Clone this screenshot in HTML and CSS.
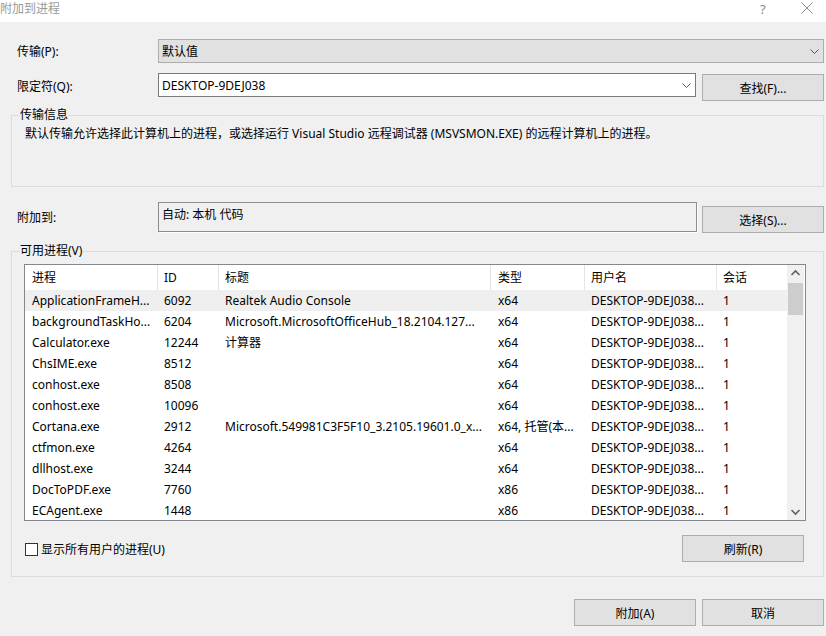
FILE: index.html
```html
<!DOCTYPE html>
<html lang="zh-CN">
<head>
<meta charset="utf-8">
<title>附加到进程</title>
<link rel="stylesheet" href="styles.css">
</head>
<body>
<div class="dialog">
  <div class="titlebar">
    <span class="title">附加到进程</span>
    <span class="help">?</span>
    <svg class="close" width="12" height="12" viewBox="0 0 12 12"><path d="M0.5 0.5L11.5 11.5M11.5 0.5L0.5 11.5" stroke="#8a8a8a" stroke-width="1" fill="none"/></svg>
  </div>
  <div class="body">
    <div class="row row-transport">
      <label class="lbl">传输(P):</label>
      <div class="select">
        <span>默认值</span>
        <svg class="chev" width="9" height="5" viewBox="0 0 9 5"><path d="M0.5 0.5L4.5 4.5L8.5 0.5" stroke="#555" fill="none"/></svg>
      </div>
    </div>
    <div class="row row-qual">
      <label class="lbl">限定符(Q):</label>
      <div class="combo">
        <span>DESKTOP-9DEJ038</span>
        <svg class="chev" width="9" height="5" viewBox="0 0 9 5"><path d="M0.5 0.5L4.5 4.5L8.5 0.5" stroke="#555" fill="none"/></svg>
      </div>
      <button class="btn btn-find">查找(F)...</button>
    </div>
    <fieldset class="group group-info">
      <legend>传输信息</legend>
      <p class="info">默认传输允许选择此计算机上的进程，或选择运行 Visual Studio 远程调试器 (MSVSMON.EXE) 的远程计算机上的进程。</p>
    </fieldset>
    <div class="row row-attach">
      <label class="lbl">附加到:</label>
      <div class="attachbox">自动: 本机 代码</div>
      <button class="btn btn-select">选择(S)...</button>
    </div>
    <fieldset class="group group-proc">
      <legend>可用进程(V)</legend>
      <div class="list">
        <div class="table">
          <div class="thead">
            <div class="c c1">进程</div><div class="c c2">ID</div><div class="c c3">标题</div><div class="c c4">类型</div><div class="c c5">用户名</div><div class="c c6">会话</div>
          </div>
          <div class="tr hl"><div class="c c1">ApplicationFrameH...</div><div class="c c2">6092</div><div class="c c3">Realtek Audio Console</div><div class="c c4">x64</div><div class="c c5">DESKTOP-9DEJ038...</div><div class="c c6">1</div></div>
          <div class="tr"><div class="c c1">backgroundTaskHo...</div><div class="c c2">6204</div><div class="c c3">Microsoft.MicrosoftOfficeHub_18.2104.127...</div><div class="c c4">x64</div><div class="c c5">DESKTOP-9DEJ038...</div><div class="c c6">1</div></div>
          <div class="tr"><div class="c c1">Calculator.exe</div><div class="c c2">12244</div><div class="c c3">计算器</div><div class="c c4">x64</div><div class="c c5">DESKTOP-9DEJ038...</div><div class="c c6">1</div></div>
          <div class="tr"><div class="c c1">ChsIME.exe</div><div class="c c2">8512</div><div class="c c3"></div><div class="c c4">x64</div><div class="c c5">DESKTOP-9DEJ038...</div><div class="c c6">1</div></div>
          <div class="tr"><div class="c c1">conhost.exe</div><div class="c c2">8508</div><div class="c c3"></div><div class="c c4">x64</div><div class="c c5">DESKTOP-9DEJ038...</div><div class="c c6">1</div></div>
          <div class="tr"><div class="c c1">conhost.exe</div><div class="c c2">10096</div><div class="c c3"></div><div class="c c4">x64</div><div class="c c5">DESKTOP-9DEJ038...</div><div class="c c6">1</div></div>
          <div class="tr"><div class="c c1">Cortana.exe</div><div class="c c2">2912</div><div class="c c3">Microsoft.549981C3F5F10_3.2105.19601.0_x...</div><div class="c c4">x64, 托管(本...</div><div class="c c5">DESKTOP-9DEJ038...</div><div class="c c6">1</div></div>
          <div class="tr"><div class="c c1">ctfmon.exe</div><div class="c c2">4264</div><div class="c c3"></div><div class="c c4">x64</div><div class="c c5">DESKTOP-9DEJ038...</div><div class="c c6">1</div></div>
          <div class="tr"><div class="c c1">dllhost.exe</div><div class="c c2">3244</div><div class="c c3"></div><div class="c c4">x64</div><div class="c c5">DESKTOP-9DEJ038...</div><div class="c c6">1</div></div>
          <div class="tr"><div class="c c1">DocToPDF.exe</div><div class="c c2">7760</div><div class="c c3"></div><div class="c c4">x86</div><div class="c c5">DESKTOP-9DEJ038...</div><div class="c c6">1</div></div>
          <div class="tr"><div class="c c1">ECAgent.exe</div><div class="c c2">1448</div><div class="c c3"></div><div class="c c4">x86</div><div class="c c5">DESKTOP-9DEJ038...</div><div class="c c6">1</div></div>
        </div>
        <div class="scroll">
          <svg class="arr" width="17" height="17" viewBox="0 0 17 17"><path d="M4.5 10L8.5 6L12.5 10" stroke="#606060" stroke-width="1.6" fill="none"/></svg>
          <div class="track"><div class="thumb"></div></div>
          <svg class="arr" width="17" height="17" viewBox="0 0 17 17"><path d="M4.5 7L8.5 11L12.5 7" stroke="#606060" stroke-width="1.6" fill="none"/></svg>
        </div>
      </div>
      <div class="bottomrow">
        <label class="chk"><span class="box"></span>显示所有用户的进程(U)</label>
        <button class="btn btn-refresh">刷新(R)</button>
      </div>
    </fieldset>
    <div class="footer">
      <button class="btn">附加(A)</button>
      <button class="btn">取消</button>
    </div>
  </div>
</div>
</body>
</html>
```

FILE: styles.css
```css
* { box-sizing: border-box; }
html, body { margin: 0; padding: 0; }
body {
  width: 826px;
  height: 636px;
  overflow: hidden;
  background: #f0f0f0;
  font-family: "Noto Sans", "Noto Sans CJK SC", sans-serif;
  font-size: 12px;
  color: #000;
}
.dialog { width: 826px; height: 636px; }
.titlebar {
  height: 22px;
  background: #fff;
  display: flex;
  align-items: center;
  position: relative;
  font-size: 12px;
  color: #9a9a9a;
}
.title { padding-left: 0; margin-top: -7px; }
.help { position: absolute; left: 760px; top: 0; font-size: 13px; color: #8a8a8a; }
.close { position: absolute; left: 801px; top: 2px; }
.body { padding: 17px 2px 0 11px; }
.row { display: flex; align-items: flex-start; }
.lbl { width: 147px; padding-left: 6px; flex: none; }
.row-transport { height: 24px; }
.row-transport .lbl { padding-top: 3px; }
.select {
  width: 666px; height: 24px;
  background: #e1e1e1;
  border: 1px solid #adadad;
  display: flex; align-items: center; justify-content: space-between;
  padding: 0 4px 0 3px;
}
.chev { flex: none; }
.row-qual { margin-top: 10px; height: 28px; }
.row-qual .lbl { padding-top: 4px; }
.combo {
  width: 538px; height: 24px;
  background: #fff;
  border: 1px solid #7a7a7a;
  display: flex; align-items: center; justify-content: space-between;
  padding: 0 4px 0 3px;
}
.btn {
  font-family: inherit; font-size: 12px; color: #000;
  background: #e1e1e1;
  border: 1px solid #adadad;
  width: 122px; height: 27px;
  padding: 0;
  flex: none;
}
.btn-find { margin-left: 6px; margin-top: 1px; }
.group {
  margin: 0;
  border: 1px solid #dcdcdc;
  border-radius: 0;
  padding: 0;
  width: 813px;
}
.group legend { padding: 0 1px 0 0; margin-left: 8px; line-height: 14px; }
.group-info { margin-top: 7px; height: 79px; }
.info { margin: 2px 0 0 13px; }
.row-attach { margin-top: 15px; height: 31px; }
.row-attach .lbl { padding-top: 6px; }
.attachbox {
  width: 539px; height: 30px;
  background: #f0f0f0;
  border: 1px solid #8c8c8c;
  box-shadow: 1px 1px 0 #fff;
  padding: 2px 0 0 3px;
}
.btn-select { margin-left: 5px; margin-top: 4px; }
.group-proc { margin-top: 11px; height: 333px; }
.list {
  margin: 6px 0 0 12px;
  width: 782px; height: 257px;
  border: 1px solid #828790;
  background: #fff;
  display: flex;
}
.table { flex: 1; }
.thead, .tr { display: flex; }
.thead { height: 25px; }
.thead .c { border-right: 1px solid #e5e5e5; line-height: 25px; }
.tr { height: 21px; line-height: 21px; }
.tr.hl { background: #efefef; }
.c { padding-left: 7px; white-space: nowrap; overflow: hidden; flex: none; }
.c1 { width: 133px; }
.c2 { width: 61px; padding-left: 6px; }
.c3 { width: 272px; padding-left: 6px; }
.c4 { width: 94px; padding-left: 7px; }
.c5 { width: 132px; padding-left: 6px; }
.c6 { width: 69px; padding-left: 6px; }
.thead .c6 { border-right: none; }
.scroll {
  width: 17px; flex: none;
  background: #f0f0f0;
  display: flex; flex-direction: column;
  margin-right: 1px;
}
.arr { display: block; flex: none; }
.track { flex: 1; padding: 0 1px; }
.thumb { height: 32px; background: #cdcdcd; margin-top: 1px; }
.bottomrow {
  display: flex; justify-content: space-between; align-items: flex-start;
  margin: 14px 0 0 13px; width: 779px;
}
.chk { display: flex; align-items: center; margin-top: 5px; }
.box {
  width: 13px; height: 13px;
  border: 1px solid #333;
  background: #fff;
  margin-right: 3px;
}
.footer {
  display: flex; justify-content: flex-end; gap: 6px;
  margin-top: 22px; width: 813px;
}
```
